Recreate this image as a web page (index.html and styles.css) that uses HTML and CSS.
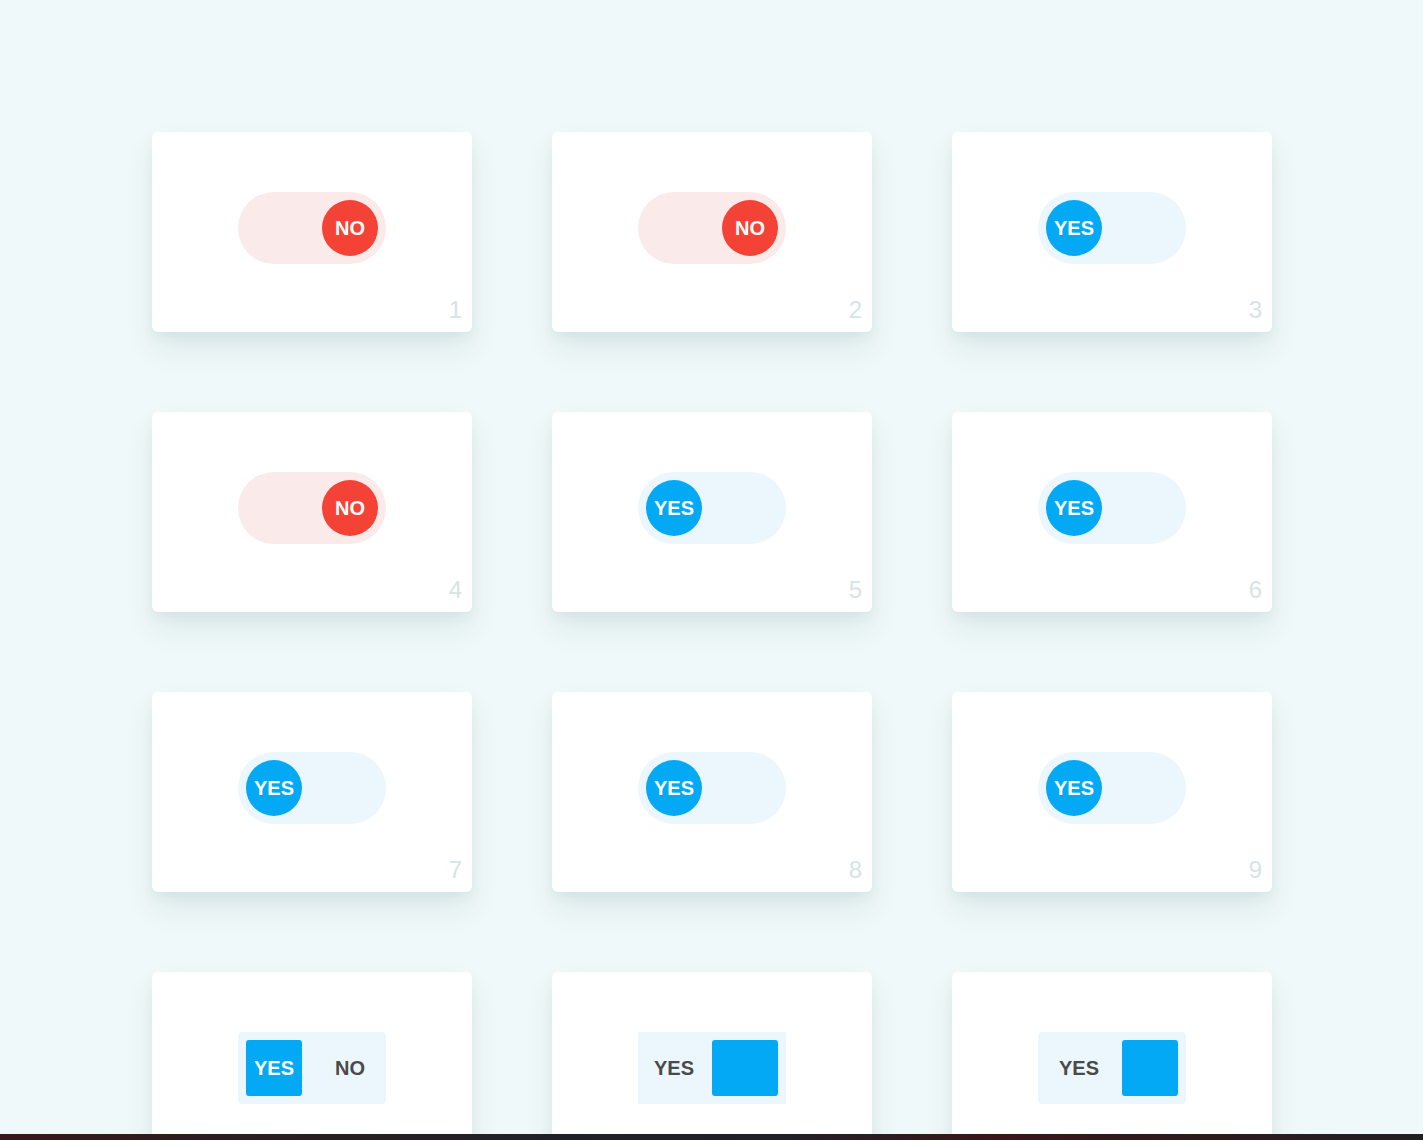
FILE: index.html
```html
<!DOCTYPE html>
<html>
<head>
<meta charset="utf-8">
<link rel="stylesheet" href="styles.css">
</head>
<body>
<main class="grid">
  <div class="card"><div class="toggle no"><span class="knob">NO</span></div><span class="num">1</span></div>
  <div class="card"><div class="toggle no"><span class="knob">NO</span></div><span class="num">2</span></div>
  <div class="card"><div class="toggle yes"><span class="knob">YES</span></div><span class="num">3</span></div>
  <div class="card"><div class="toggle no"><span class="knob">NO</span></div><span class="num">4</span></div>
  <div class="card"><div class="toggle yes"><span class="knob">YES</span></div><span class="num">5</span></div>
  <div class="card"><div class="toggle yes"><span class="knob">YES</span></div><span class="num">6</span></div>
  <div class="card"><div class="toggle yes"><span class="knob">YES</span></div><span class="num">7</span></div>
  <div class="card"><div class="toggle yes"><span class="knob">YES</span></div><span class="num">8</span></div>
  <div class="card"><div class="toggle yes"><span class="knob">YES</span></div><span class="num">9</span></div>
  <div class="card">
    <div class="box box-a"><span class="slot active">YES</span><span class="slot">NO</span></div>
  </div>
  <div class="card">
    <div class="box box-b"><span class="slot label">YES</span><span class="block wide"></span></div>
  </div>
  <div class="card">
    <div class="box box-c"><span class="slot label">YES</span><span class="block"></span></div>
  </div>
</main>
<div class="bar"></div>
</body>
</html>
```
FILE: styles.css
```css
html, body {
  margin: 0;
  padding: 0;
  overflow: hidden;
}
body {
  background: #f0f9f9;
  font-family: "Liberation Sans", Arial, sans-serif;
  height: 1140px;
}
.grid {
  display: grid;
  grid-template-columns: repeat(3, 320px);
  column-gap: 80px;
  row-gap: 80px;
  justify-content: center;
  padding-top: 132px;
  padding-left: 1px;
}
.card {
  position: relative;
  width: 320px;
  height: 200px;
  box-sizing: border-box;
  background: #fff;
  border-radius: 6px;
  box-shadow: 0 16px 30px rgba(0, 70, 80, 0.09), 0 6px 12px rgba(0, 70, 80, 0.04);
  display: flex;
  justify-content: center;
  align-items: flex-start;
  padding-top: 60px;
}
.toggle {
  width: 148px;
  height: 72px;
  border-radius: 36px;
  box-sizing: border-box;
  padding: 8px;
  display: flex;
}
.toggle.no {
  background: #fbeaea;
  justify-content: flex-end;
}
.toggle.yes {
  background: #ebf7fc;
  justify-content: flex-start;
}
.knob {
  width: 56px;
  height: 56px;
  border-radius: 50%;
  display: flex;
  align-items: center;
  justify-content: center;
  color: #fff;
  font-weight: bold;
  font-size: 20px;
}
.no .knob { background: #f44336; }
.yes .knob { background: #03a9f4; }
.num {
  position: absolute;
  right: 10px;
  bottom: 10px;
  font-size: 24px;
  line-height: 24px;
  color: #d6e4e6;
}
.box {
  width: 148px;
  height: 72px;
  box-sizing: border-box;
  padding: 8px;
  background: #ebf7fc;
  display: flex;
  justify-content: space-between;
}
.box-a, .box-c { border-radius: 4px; }
.slot {
  width: 56px;
  height: 56px;
  display: flex;
  align-items: center;
  justify-content: center;
  font-weight: bold;
  font-size: 20px;
  color: #4a4a4a;
}
.slot.active {
  background: #03a9f4;
  color: #fff;
  border-radius: 3px;
}
.box-c .label { width: 66px; }
.block {
  width: 56px;
  height: 56px;
  background: #03a9f4;
  border-radius: 3px;
}
.block.wide { width: 66px; }
.bar {
  position: fixed;
  left: 0;
  right: 0;
  bottom: 0;
  height: 6px;
  background: linear-gradient(90deg, #3a171b 0%, #2a1f22 20%, #1f2129 40%, #222028 55%, #3d1518 70%, #2e1b1e 85%, #231e21 100%);
}
```
